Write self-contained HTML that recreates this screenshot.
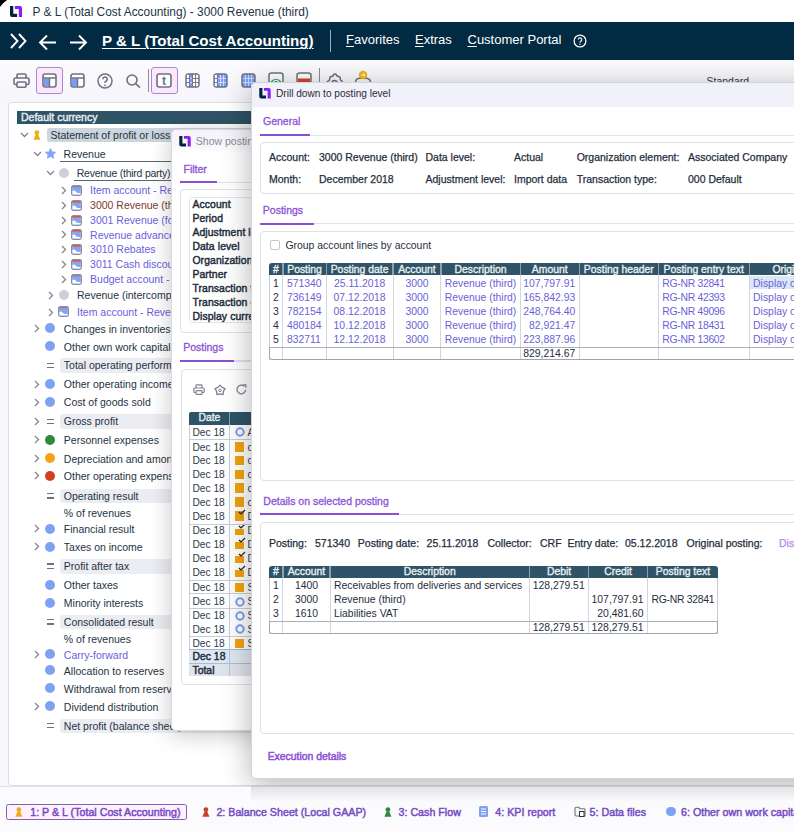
<!DOCTYPE html><html><head><meta charset="utf-8"><style>
html,body{margin:0;padding:0;width:794px;height:832px;overflow:hidden;background:#f8f7fc;font-family:"Liberation Sans", sans-serif;}
.t{position:absolute;white-space:nowrap;line-height:1;}
svg{display:block}
</style></head><body>
<div style="position:absolute;left:0px;top:0px;width:794px;height:22px;background:#ffffff"></div>
<svg style="position:absolute;left:0px;top:0px;" width="8" height="8" viewBox="0 0 8 8"><path d="M0 0H7.2Q3 2.6 0 7Z" fill="#000"/></svg>
<svg style="position:absolute;left:10px;top:6px;" width="12" height="11" viewBox="0 0 12 11"><path d="M0 0h3.3v7.8h3.8v3.1H2a2 2 0 0 1-2-2z" fill="#02233f"/><path d="M4.9 0h5.1a2 2 0 0 1 2 2v8.9H8.8V3H4.9z" fill="#8b1cf5"/></svg>
<div class="t" style="left:32.5px;top:6.93px;font-size:11.9px;color:#1d3347;font-weight:400;">P &amp; L (Total Cost Accounting) - 3000 Revenue (third)</div>
<div style="position:absolute;left:0px;top:22px;width:794px;height:38px;background:#022a42"></div>
<svg style="position:absolute;left:9px;top:32px;" width="20" height="18" viewBox="0 0 20 18"><path d="M2 2l6.5 7-6.5 7M10 2l6.5 7-6.5 7" stroke="#fff" stroke-width="1.9" fill="none"/></svg>
<svg style="position:absolute;left:38px;top:33.8px;" width="19" height="17" viewBox="0 0 19 17"><path d="M18 8.5H2M9 1.5L2 8.5l7 7" stroke="#fff" stroke-width="1.9" fill="none"/></svg>
<svg style="position:absolute;left:69px;top:33.8px;" width="19" height="17" viewBox="0 0 19 17"><path d="M1 8.5h16M10 1.5l7 7-7 7" stroke="#fff" stroke-width="1.9" fill="none"/></svg>
<div class="t" style="left:102.0px;top:33.22px;font-size:15.1px;color:#ffffff;font-weight:700;text-decoration:underline;text-underline-offset:2px;text-decoration-thickness:1px;">P &amp; L (Total Cost Accounting)</div>
<div style="position:absolute;left:330px;top:30px;width:1px;height:22px;background:#9fb0bf"></div>
<div class="t" style="left:346px;top:33.30px;font-size:13px;color:#fff;"><span style="text-decoration:underline;text-underline-offset:2px">F</span>avorites</div>
<div class="t" style="left:415px;top:33.30px;font-size:13px;color:#fff;"><span style="text-decoration:underline;text-underline-offset:2px">E</span>xtras</div>
<div class="t" style="left:467.5px;top:33.30px;font-size:13px;color:#fff;"><span style="text-decoration:underline;text-underline-offset:2px">C</span>ustomer Portal</div>
<svg style="position:absolute;left:573px;top:34px;" width="14" height="14" viewBox="0 0 14 14"><circle cx="7" cy="7" r="5.9" stroke="#fff" stroke-width="1.3" fill="none"/><path d="M5.3 5.6a1.75 1.75 0 1 1 2.5 1.6c-.5.25-.8.6-.8 1.2v.4" stroke="#fff" stroke-width="1.1" fill="none"/><circle cx="7" cy="10.2" r=".7" fill="#fff"/></svg>
<div style="position:absolute;left:0px;top:60px;width:794px;height:42px;background:linear-gradient(#fbfbfd,#f6f5fa)"></div>
<svg style="position:absolute;left:13px;top:73px;" width="17" height="15" viewBox="0 0 17 15"><path d="M4 5V2.2A1.2 1.2 0 0 1 5.2 1h6.6A1.2 1.2 0 0 1 13 2.2V5" stroke="#6e7080" stroke-width="1.6" fill="none"/><path d="M4 11.5H2.5A1.5 1.5 0 0 1 1 10V6.5A1.5 1.5 0 0 1 2.5 5h12A1.5 1.5 0 0 1 16 6.5V10a1.5 1.5 0 0 1-1.5 1.5H13" stroke="#6e7080" stroke-width="1.6" fill="none"/><rect x="4" y="9" width="9" height="5.2" rx="1" stroke="#6e7080" stroke-width="1.6" fill="none"/></svg>
<div style="position:absolute;left:36px;top:67px;width:25px;height:25px;background:#fce8fa;border:1px solid #a48ad6;border-radius:3px"></div>
<svg style="position:absolute;left:42px;top:73px;" width="15" height="15" viewBox="0 0 15 15"><rect x="1" y="1" width="13" height="13" rx="2.2" fill="#fff" stroke="#6e7080" stroke-width="1.6"/><rect x="1.8" y="5.6" width="5.2" height="7.6" fill="#7b9cf2"/><path d="M1 5h13M7.5 5v9" stroke="#6e7080" stroke-width="1.4"/></svg>
<svg style="position:absolute;left:70px;top:73px;" width="15" height="15" viewBox="0 0 15 15"><rect x="1" y="1" width="13" height="13" rx="2.2" fill="#fff" stroke="#6e7080" stroke-width="1.6"/><rect x="1.8" y="5.6" width="5.2" height="7.6" fill="#7b9cf2"/><path d="M1 5h13M7.5 5v9" stroke="#6e7080" stroke-width="1.4"/></svg>
<svg style="position:absolute;left:97px;top:73px;" width="16" height="16" viewBox="0 0 16 16"><circle cx="8" cy="8" r="7" stroke="#6e7080" stroke-width="1.5" fill="none"/><path d="M5.8 6.2a2.2 2.2 0 1 1 3.1 2c-.6.3-.9.7-.9 1.4v.5" stroke="#6e7080" stroke-width="1.5" fill="none"/><circle cx="8" cy="12.3" r=".9" fill="#6e7080"/></svg>
<svg style="position:absolute;left:126px;top:74px;" width="15" height="14" viewBox="0 0 15 14"><circle cx="6" cy="6" r="5" stroke="#6e7080" stroke-width="1.6" fill="none"/><path d="M9.6 9.6L14 13.6" stroke="#6e7080" stroke-width="1.6"/></svg>
<div style="position:absolute;left:148px;top:69px;width:1.3px;height:23px;background:#8a8c99"></div>
<div style="position:absolute;left:151px;top:67px;width:25px;height:25px;background:#fce8fa;border:1px solid #a48ad6;border-radius:3px"></div>
<svg style="position:absolute;left:156px;top:73px;" width="16" height="15" viewBox="0 0 16 15"><rect x="1" y="1" width="14" height="13" rx="2.2" fill="#fff" stroke="#6e7080" stroke-width="1.6"/><text x="8" y="12" font-size="12" font-family="Liberation Sans" font-weight="700" text-anchor="middle" fill="#6e7080">t</text></svg>
<svg style="position:absolute;left:184.5px;top:73px;" width="15" height="15" viewBox="0 0 15 15"><rect x="0.3" y="0.3" width="14.4" height="14.4" rx="3" fill="#6e7080"/><rect x="4.88" y="1.8" width="2.17" height="11.4" fill="#7b9cf2"/><rect x="1.80" y="1.80" width="2.17" height="3.20" fill="#fff"/><rect x="1.80" y="5.90" width="2.17" height="3.20" fill="#fff"/><rect x="1.80" y="10.00" width="2.17" height="3.20" fill="#fff"/><rect x="7.95" y="1.80" width="2.17" height="3.20" fill="#fff"/><rect x="7.95" y="5.90" width="2.17" height="3.20" fill="#fff"/><rect x="7.95" y="10.00" width="2.17" height="3.20" fill="#fff"/><rect x="11.03" y="1.80" width="2.17" height="3.20" fill="#fff"/><rect x="11.03" y="5.90" width="2.17" height="3.20" fill="#fff"/><rect x="11.03" y="10.00" width="2.17" height="3.20" fill="#fff"/><path d="M4.88 5.45H7.05" stroke="#dfe7ff" stroke-width=".8"/><path d="M4.88 9.55H7.05" stroke="#dfe7ff" stroke-width=".8"/></svg>
<svg style="position:absolute;left:212.5px;top:73px;" width="15" height="15" viewBox="0 0 15 15"><rect x="0.3" y="0.3" width="14.4" height="14.4" rx="3" fill="#6e7080"/><rect x="4.88" y="1.8" width="8.32" height="11.4" fill="#7b9cf2"/><rect x="1.80" y="1.80" width="2.17" height="3.20" fill="#fff"/><rect x="1.80" y="5.90" width="2.17" height="3.20" fill="#fff"/><rect x="1.80" y="10.00" width="2.17" height="3.20" fill="#fff"/><path d="M4.88 5.45H13.20" stroke="#dfe7ff" stroke-width=".8"/><path d="M4.88 9.55H13.20" stroke="#dfe7ff" stroke-width=".8"/><path d="M7.50 1.8v11.4" stroke="#dfe7ff" stroke-width=".8"/><path d="M10.57 1.8v11.4" stroke="#dfe7ff" stroke-width=".8"/></svg>
<svg style="position:absolute;left:240.5px;top:73px;" width="15" height="15" viewBox="0 0 15 15"><rect x="0.3" y="0.3" width="14.4" height="14.4" rx="3" fill="#6e7080"/><rect x="1.80" y="1.8" width="11.40" height="11.4" fill="#7b9cf2"/><path d="M1.80 5.45H13.20" stroke="#dfe7ff" stroke-width=".8"/><path d="M1.80 9.55H13.20" stroke="#dfe7ff" stroke-width=".8"/><path d="M4.42 1.8v11.4" stroke="#dfe7ff" stroke-width=".8"/><path d="M7.50 1.8v11.4" stroke="#dfe7ff" stroke-width=".8"/><path d="M10.57 1.8v11.4" stroke="#dfe7ff" stroke-width=".8"/></svg>
<svg style="position:absolute;left:268px;top:72px;" width="16" height="10" viewBox="0 0 16 10"><rect x="1" y="1" width="14" height="14" rx="2.5" fill="#fff" stroke="#6e7080" stroke-width="1.5"/><path d="M2.5 9.5Q8 4 13.5 9.5Q8 15 2.5 9.5z" fill="#3aa55a"/><path d="M5 9.8Q8 7 11 9.8" stroke="#fff" stroke-width="1.2" fill="none"/></svg>
<svg style="position:absolute;left:296px;top:72px;" width="16" height="10" viewBox="0 0 16 10"><rect x="1" y="1" width="14" height="14" rx="2.5" fill="#fff" stroke="#6e7080" stroke-width="1.5"/><rect x="2" y="6.5" width="12" height="5" fill="#d8412f"/></svg>
<div style="position:absolute;left:319px;top:68px;width:1.2px;height:14px;background:#8a8c99"></div>
<svg style="position:absolute;left:326px;top:72.5px;" width="17" height="10" viewBox="0 0 17 10"><path d="M3 11V8.5l2-1.5.5-3 2.8-1 1.5-2h1.4l1.5 2 2.8 1 .5 3 2 1.5V11" stroke="#6e7080" stroke-width="1.5" fill="none" transform="translate(-1.5,0)"/><circle cx="8.5" cy="10" r="2.5" stroke="#6e7080" stroke-width="1.5" fill="none"/></svg>
<svg style="position:absolute;left:354px;top:70px;" width="18" height="12" viewBox="0 0 18 12"><path d="M1.5 12a4 4 0 0 1 5.5-3.5M16.5 12a4 4 0 0 0-5.5-3.5" stroke="#6e7080" stroke-width="1.5" fill="none"/><circle cx="9" cy="5" r="4.2" fill="#f2b416"/><path d="M7 5h4M9.4 3.3L11 5 9.4 6.7" stroke="#fff" stroke-width="1" fill="none"/></svg>
<div class="t" style="left:706.5px;top:76.11px;font-size:10.5px;color:#2b3a48;font-weight:400;">Standard</div>
<div style="position:absolute;left:8px;top:102px;width:800px;height:684px;background:#ffffff;border:1px solid #dcdce3;border-radius:4px;box-sizing:border-box"></div>
<div style="position:absolute;left:17px;top:111px;width:300px;height:13px;background:#2f5467"></div>
<div class="t" style="left:21.0px;top:112.41px;font-size:10.5px;color:#e9eff3;font-weight:400;-webkit-text-stroke:0.4px #e9eff3;">Default currency</div>
<div style="position:absolute;left:47px;top:127.5px;width:213px;height:14.5px;background:#cdd5de;border-radius:3px"></div>
<svg style="position:absolute;left:19.5px;top:131.8px;" width="9" height="6" viewBox="0 0 9 6"><path d="M1 1l3.5 3.5L8 1" stroke="#84848f" stroke-width="1.3" fill="none"/></svg>
<svg style="position:absolute;left:33.2px;top:129.8px;" width="8" height="10" viewBox="0 0 8 10"><circle cx="3.9" cy="2.6" r="2.4" fill="#f0ac12"/><path d="M2.7 4.2h2.4l2.3 5.6H.4z" fill="#f0ac12"/></svg>
<div class="t" style="left:50.6px;top:129.91px;font-size:10.5px;color:#24333f;font-weight:400;">Statement of profit or loss</div>
<svg style="position:absolute;left:33px;top:150.7px;" width="9" height="6" viewBox="0 0 9 6"><path d="M1 1l3.5 3.5L8 1" stroke="#84848f" stroke-width="1.3" fill="none"/></svg>
<svg style="position:absolute;left:44.8px;top:148px;" width="11" height="11" viewBox="0 0 11 11"><path d="M5.50 0.60 L6.97 3.88 L10.54 4.26 L7.88 6.67 L8.62 10.19 L5.50 8.40 L2.38 10.19 L3.12 6.67 L0.46 4.26 L4.03 3.88Z" fill="#82a6f5" stroke="#82a6f5" stroke-width="0.9" stroke-linejoin="round"/></svg>
<div class="t" style="left:63.6px;top:149.01px;font-size:10.5px;color:#24333f;font-weight:400;">Revenue</div>
<div style="position:absolute;left:60px;top:161.2px;width:200px;height:1.2px;background:#5c6470"></div>
<svg style="position:absolute;left:46px;top:170px;" width="9" height="6" viewBox="0 0 9 6"><path d="M1 1l3.5 3.5L8 1" stroke="#84848f" stroke-width="1.3" fill="none"/></svg>
<div style="position:absolute;left:58.5px;top:167.8px;width:10px;height:10px;background:#cfcfdc;border-radius:50%"></div>
<div class="t" style="left:76.7px;top:167.81px;font-size:10.5px;color:#24333f;font-weight:400;letter-spacing:-0.24px;">Revenue (third party)</div>
<div style="position:absolute;left:73.8px;top:179.8px;width:200px;height:1.2px;background:#5c6470"></div>
<svg style="position:absolute;left:61px;top:185.8px;" width="6" height="9" viewBox="0 0 6 9"><path d="M1 1l3.5 3.5L1 8" stroke="#84848f" stroke-width="1.3" fill="none"/></svg>
<svg style="position:absolute;left:71px;top:184.8px;" width="11" height="11" viewBox="0 0 11 11"><rect x=".6" y=".6" width="9.8" height="9.8" rx="1.8" fill="#fff"/><rect x="1.2" y="2.6" width="8.6" height="7.2" fill="#82a6f5"/><path d="M1.2 9.8V6.2c1.3-1 2.4-.8 3.4.4 1 1.1 2.2 1.6 3.8 1.5h1.4v1.7z" fill="#fff"/><path d="M.6 2.4A1.8 1.8 0 0 1 2.4.6h6.2a1.8 1.8 0 0 1 1.8 1.8v.4H.6z" fill="#8586a0"/><rect x=".6" y=".6" width="9.8" height="9.8" rx="1.8" fill="none" stroke="#8d8ea5" stroke-width="1.2"/></svg>
<div class="t" style="left:90.1px;top:185.01px;font-size:10.5px;color:#6a5ee0;font-weight:400;">Item account - Revenue</div>
<svg style="position:absolute;left:61px;top:200.6px;" width="6" height="9" viewBox="0 0 6 9"><path d="M1 1l3.5 3.5L1 8" stroke="#84848f" stroke-width="1.3" fill="none"/></svg>
<svg style="position:absolute;left:71px;top:199.6px;" width="11" height="11" viewBox="0 0 11 11"><rect x=".6" y=".6" width="9.8" height="9.8" rx="1.8" fill="#fff"/><rect x="1.2" y="2.6" width="8.6" height="7.2" fill="#82a6f5"/><path d="M1.2 9.8V6.2c1.3-1 2.4-.8 3.4.4 1 1.1 2.2 1.6 3.8 1.5h1.4v1.7z" fill="#fff"/><path d="M.6 2.4A1.8 1.8 0 0 1 2.4.6h6.2a1.8 1.8 0 0 1 1.8 1.8v.4H.6z" fill="#d2523a"/><rect x=".6" y=".6" width="9.8" height="9.8" rx="1.8" fill="none" stroke="#8d8ea5" stroke-width="1.2"/></svg>
<div class="t" style="left:90.1px;top:199.81px;font-size:10.5px;color:#7b3a2e;font-weight:400;">3000 Revenue (third)</div>
<svg style="position:absolute;left:61px;top:215.5px;" width="6" height="9" viewBox="0 0 6 9"><path d="M1 1l3.5 3.5L1 8" stroke="#84848f" stroke-width="1.3" fill="none"/></svg>
<svg style="position:absolute;left:71px;top:214.5px;" width="11" height="11" viewBox="0 0 11 11"><rect x=".6" y=".6" width="9.8" height="9.8" rx="1.8" fill="#fff"/><rect x="1.2" y="2.6" width="8.6" height="7.2" fill="#82a6f5"/><path d="M1.2 9.8V6.2c1.3-1 2.4-.8 3.4.4 1 1.1 2.2 1.6 3.8 1.5h1.4v1.7z" fill="#fff"/><path d="M.6 2.4A1.8 1.8 0 0 1 2.4.6h6.2a1.8 1.8 0 0 1 1.8 1.8v.4H.6z" fill="#d2523a"/><rect x=".6" y=".6" width="9.8" height="9.8" rx="1.8" fill="none" stroke="#8d8ea5" stroke-width="1.2"/></svg>
<div class="t" style="left:90.1px;top:214.71px;font-size:10.5px;color:#6a5ee0;font-weight:400;">3001 Revenue (foreign)</div>
<svg style="position:absolute;left:61px;top:230.3px;" width="6" height="9" viewBox="0 0 6 9"><path d="M1 1l3.5 3.5L1 8" stroke="#84848f" stroke-width="1.3" fill="none"/></svg>
<svg style="position:absolute;left:71px;top:229.3px;" width="11" height="11" viewBox="0 0 11 11"><rect x=".6" y=".6" width="9.8" height="9.8" rx="1.8" fill="#fff"/><rect x="1.2" y="2.6" width="8.6" height="7.2" fill="#82a6f5"/><path d="M1.2 9.8V6.2c1.3-1 2.4-.8 3.4.4 1 1.1 2.2 1.6 3.8 1.5h1.4v1.7z" fill="#fff"/><path d="M.6 2.4A1.8 1.8 0 0 1 2.4.6h6.2a1.8 1.8 0 0 1 1.8 1.8v.4H.6z" fill="#d2523a"/><rect x=".6" y=".6" width="9.8" height="9.8" rx="1.8" fill="none" stroke="#8d8ea5" stroke-width="1.2"/></svg>
<div class="t" style="left:90.1px;top:229.51px;font-size:10.5px;color:#6a5ee0;font-weight:400;">Revenue advances</div>
<svg style="position:absolute;left:61px;top:244.9px;" width="6" height="9" viewBox="0 0 6 9"><path d="M1 1l3.5 3.5L1 8" stroke="#84848f" stroke-width="1.3" fill="none"/></svg>
<svg style="position:absolute;left:71px;top:243.9px;" width="11" height="11" viewBox="0 0 11 11"><rect x=".6" y=".6" width="9.8" height="9.8" rx="1.8" fill="#fff"/><rect x="1.2" y="2.6" width="8.6" height="7.2" fill="#82a6f5"/><path d="M1.2 9.8V6.2c1.3-1 2.4-.8 3.4.4 1 1.1 2.2 1.6 3.8 1.5h1.4v1.7z" fill="#fff"/><path d="M.6 2.4A1.8 1.8 0 0 1 2.4.6h6.2a1.8 1.8 0 0 1 1.8 1.8v.4H.6z" fill="#d2523a"/><rect x=".6" y=".6" width="9.8" height="9.8" rx="1.8" fill="none" stroke="#8d8ea5" stroke-width="1.2"/></svg>
<div class="t" style="left:90.1px;top:244.11px;font-size:10.5px;color:#6a5ee0;font-weight:400;">3010 Rebates</div>
<svg style="position:absolute;left:61px;top:260.0px;" width="6" height="9" viewBox="0 0 6 9"><path d="M1 1l3.5 3.5L1 8" stroke="#84848f" stroke-width="1.3" fill="none"/></svg>
<svg style="position:absolute;left:71px;top:259.0px;" width="11" height="11" viewBox="0 0 11 11"><rect x=".6" y=".6" width="9.8" height="9.8" rx="1.8" fill="#fff"/><rect x="1.2" y="2.6" width="8.6" height="7.2" fill="#82a6f5"/><path d="M1.2 9.8V6.2c1.3-1 2.4-.8 3.4.4 1 1.1 2.2 1.6 3.8 1.5h1.4v1.7z" fill="#fff"/><path d="M.6 2.4A1.8 1.8 0 0 1 2.4.6h6.2a1.8 1.8 0 0 1 1.8 1.8v.4H.6z" fill="#d2523a"/><rect x=".6" y=".6" width="9.8" height="9.8" rx="1.8" fill="none" stroke="#8d8ea5" stroke-width="1.2"/></svg>
<div class="t" style="left:90.1px;top:259.21px;font-size:10.5px;color:#6a5ee0;font-weight:400;">3011 Cash discounts</div>
<svg style="position:absolute;left:61px;top:274.6px;" width="6" height="9" viewBox="0 0 6 9"><path d="M1 1l3.5 3.5L1 8" stroke="#84848f" stroke-width="1.3" fill="none"/></svg>
<svg style="position:absolute;left:71px;top:273.6px;" width="11" height="11" viewBox="0 0 11 11"><rect x=".6" y=".6" width="9.8" height="9.8" rx="1.8" fill="#fff"/><rect x="1.2" y="2.6" width="8.6" height="7.2" fill="#82a6f5"/><path d="M1.2 9.8V6.2c1.3-1 2.4-.8 3.4.4 1 1.1 2.2 1.6 3.8 1.5h1.4v1.7z" fill="#fff"/><path d="M.6 2.4A1.8 1.8 0 0 1 2.4.6h6.2a1.8 1.8 0 0 1 1.8 1.8v.4H.6z" fill="#8586a0"/><rect x=".6" y=".6" width="9.8" height="9.8" rx="1.8" fill="none" stroke="#8d8ea5" stroke-width="1.2"/></svg>
<div class="t" style="left:90.1px;top:273.81px;font-size:10.5px;color:#6a5ee0;font-weight:400;">Budget account - Revenue</div>
<svg style="position:absolute;left:47.5px;top:290.9px;" width="6" height="9" viewBox="0 0 6 9"><path d="M1 1l3.5 3.5L1 8" stroke="#84848f" stroke-width="1.3" fill="none"/></svg>
<div style="position:absolute;left:58.6px;top:290.0px;width:10px;height:10px;background:#cfcfdc;border-radius:50%"></div>
<div class="t" style="left:77.0px;top:290.11px;font-size:10.5px;color:#24333f;font-weight:400;">Revenue (intercompany)</div>
<svg style="position:absolute;left:47.5px;top:307.5px;" width="6" height="9" viewBox="0 0 6 9"><path d="M1 1l3.5 3.5L1 8" stroke="#84848f" stroke-width="1.3" fill="none"/></svg>
<svg style="position:absolute;left:58px;top:306.3px;" width="11" height="11" viewBox="0 0 11 11"><rect x=".6" y=".6" width="9.8" height="9.8" rx="1.8" fill="#fff"/><rect x="1.2" y="2.6" width="8.6" height="7.2" fill="#82a6f5"/><path d="M1.2 9.8V6.2c1.3-1 2.4-.8 3.4.4 1 1.1 2.2 1.6 3.8 1.5h1.4v1.7z" fill="#fff"/><path d="M.6 2.4A1.8 1.8 0 0 1 2.4.6h6.2a1.8 1.8 0 0 1 1.8 1.8v.4H.6z" fill="#8586a0"/><rect x=".6" y=".6" width="9.8" height="9.8" rx="1.8" fill="none" stroke="#8d8ea5" stroke-width="1.2"/></svg>
<div class="t" style="left:77.0px;top:306.71px;font-size:10.5px;color:#6a5ee0;font-weight:400;">Item account - Revenue</div>
<svg style="position:absolute;left:34px;top:323.8px;" width="6" height="9" viewBox="0 0 6 9"><path d="M1 1l3.5 3.5L1 8" stroke="#84848f" stroke-width="1.3" fill="none"/></svg>
<div style="position:absolute;left:45.1px;top:323.3px;width:10px;height:10px;background:#7ea2f3;border-radius:50%"></div>
<div class="t" style="left:63.8px;top:323.71px;font-size:10.5px;color:#24333f;font-weight:400;">Changes in inventories</div>
<div style="position:absolute;left:45.1px;top:341.3px;width:10px;height:10px;background:#7ea2f3;border-radius:50%"></div>
<div class="t" style="left:63.8px;top:341.71px;font-size:10.5px;color:#24333f;font-weight:400;">Other own work capitalised</div>
<div style="position:absolute;left:60.4px;top:358.40000000000003px;width:199.6px;height:14.599999999999966px;background:#ececf3;border-radius:3px"></div>
<div style="position:absolute;left:46.7px;top:362.5px;width:7.5px;height:1.4px;background:#6f6f7d"></div>
<div style="position:absolute;left:46.7px;top:366.8px;width:7.5px;height:1.4px;background:#6f6f7d"></div>
<div class="t" style="left:63.8px;top:360.41px;font-size:10.5px;color:#24333f;font-weight:400;">Total operating performance</div>
<svg style="position:absolute;left:34px;top:379.5px;" width="6" height="9" viewBox="0 0 6 9"><path d="M1 1l3.5 3.5L1 8" stroke="#84848f" stroke-width="1.3" fill="none"/></svg>
<div style="position:absolute;left:45.1px;top:379.0px;width:10px;height:10px;background:#7ea2f3;border-radius:50%"></div>
<div class="t" style="left:63.8px;top:379.41px;font-size:10.5px;color:#24333f;font-weight:400;">Other operating income</div>
<svg style="position:absolute;left:34px;top:397.5px;" width="6" height="9" viewBox="0 0 6 9"><path d="M1 1l3.5 3.5L1 8" stroke="#84848f" stroke-width="1.3" fill="none"/></svg>
<div style="position:absolute;left:45.1px;top:397.0px;width:10px;height:10px;background:#7ea2f3;border-radius:50%"></div>
<div class="t" style="left:63.8px;top:397.41px;font-size:10.5px;color:#24333f;font-weight:400;">Cost of goods sold</div>
<div style="position:absolute;left:60.4px;top:414.40000000000003px;width:199.6px;height:14.599999999999966px;background:#ececf3;border-radius:3px"></div>
<svg style="position:absolute;left:34px;top:416.5px;" width="6" height="9" viewBox="0 0 6 9"><path d="M1 1l3.5 3.5L1 8" stroke="#84848f" stroke-width="1.3" fill="none"/></svg>
<div style="position:absolute;left:46.7px;top:418.5px;width:7.5px;height:1.4px;background:#6f6f7d"></div>
<div style="position:absolute;left:46.7px;top:422.8px;width:7.5px;height:1.4px;background:#6f6f7d"></div>
<div class="t" style="left:63.8px;top:416.41px;font-size:10.5px;color:#24333f;font-weight:400;">Gross profit</div>
<svg style="position:absolute;left:34px;top:435.09999999999997px;" width="6" height="9" viewBox="0 0 6 9"><path d="M1 1l3.5 3.5L1 8" stroke="#84848f" stroke-width="1.3" fill="none"/></svg>
<div style="position:absolute;left:45.1px;top:434.59999999999997px;width:10px;height:10px;background:#2d8a3a;border-radius:50%"></div>
<div class="t" style="left:63.8px;top:435.01px;font-size:10.5px;color:#24333f;font-weight:400;">Personnel expenses</div>
<svg style="position:absolute;left:34px;top:453.8px;" width="6" height="9" viewBox="0 0 6 9"><path d="M1 1l3.5 3.5L1 8" stroke="#84848f" stroke-width="1.3" fill="none"/></svg>
<div style="position:absolute;left:45.1px;top:453.3px;width:10px;height:10px;background:#f5a31a;border-radius:50%"></div>
<div class="t" style="left:63.8px;top:453.71px;font-size:10.5px;color:#24333f;font-weight:400;">Depreciation and amortisation</div>
<svg style="position:absolute;left:34px;top:471.2px;" width="6" height="9" viewBox="0 0 6 9"><path d="M1 1l3.5 3.5L1 8" stroke="#84848f" stroke-width="1.3" fill="none"/></svg>
<div style="position:absolute;left:45.1px;top:470.7px;width:10px;height:10px;background:#d4401f;border-radius:50%"></div>
<div class="t" style="left:63.8px;top:471.11px;font-size:10.5px;color:#24333f;font-weight:400;">Other operating expenses</div>
<div style="position:absolute;left:60.4px;top:488.8px;width:199.6px;height:14.599999999999966px;background:#ececf3;border-radius:3px"></div>
<div style="position:absolute;left:46.7px;top:492.9px;width:7.5px;height:1.4px;background:#6f6f7d"></div>
<div style="position:absolute;left:46.7px;top:497.2px;width:7.5px;height:1.4px;background:#6f6f7d"></div>
<div class="t" style="left:63.8px;top:490.81px;font-size:10.5px;color:#24333f;font-weight:400;">Operating result</div>
<div class="t" style="left:63.8px;top:507.81px;font-size:10.5px;color:#24333f;font-weight:400;">% of revenues</div>
<svg style="position:absolute;left:34px;top:524.3000000000001px;" width="6" height="9" viewBox="0 0 6 9"><path d="M1 1l3.5 3.5L1 8" stroke="#84848f" stroke-width="1.3" fill="none"/></svg>
<div style="position:absolute;left:45.1px;top:523.8000000000001px;width:10px;height:10px;background:#7ea2f3;border-radius:50%"></div>
<div class="t" style="left:63.8px;top:524.21px;font-size:10.5px;color:#24333f;font-weight:400;">Financial result</div>
<svg style="position:absolute;left:34px;top:542.3000000000001px;" width="6" height="9" viewBox="0 0 6 9"><path d="M1 1l3.5 3.5L1 8" stroke="#84848f" stroke-width="1.3" fill="none"/></svg>
<div style="position:absolute;left:45.1px;top:541.8000000000001px;width:10px;height:10px;background:#7ea2f3;border-radius:50%"></div>
<div class="t" style="left:63.8px;top:542.21px;font-size:10.5px;color:#24333f;font-weight:400;">Taxes on income</div>
<div style="position:absolute;left:60.4px;top:559.2px;width:199.6px;height:14.600000000000023px;background:#ececf3;border-radius:3px"></div>
<div style="position:absolute;left:46.7px;top:563.3000000000001px;width:7.5px;height:1.4px;background:#6f6f7d"></div>
<div style="position:absolute;left:46.7px;top:567.6px;width:7.5px;height:1.4px;background:#6f6f7d"></div>
<div class="t" style="left:63.8px;top:561.21px;font-size:10.5px;color:#24333f;font-weight:400;">Profit after tax</div>
<div style="position:absolute;left:45.1px;top:579.8000000000001px;width:10px;height:10px;background:#7ea2f3;border-radius:50%"></div>
<div class="t" style="left:63.8px;top:580.21px;font-size:10.5px;color:#24333f;font-weight:400;">Other taxes</div>
<div style="position:absolute;left:45.1px;top:597.8000000000001px;width:10px;height:10px;background:#7ea2f3;border-radius:50%"></div>
<div class="t" style="left:63.8px;top:598.21px;font-size:10.5px;color:#24333f;font-weight:400;">Minority interests</div>
<div style="position:absolute;left:60.4px;top:614.9px;width:199.6px;height:14.600000000000023px;background:#ececf3;border-radius:3px"></div>
<div style="position:absolute;left:46.7px;top:619.0px;width:7.5px;height:1.4px;background:#6f6f7d"></div>
<div style="position:absolute;left:46.7px;top:623.3px;width:7.5px;height:1.4px;background:#6f6f7d"></div>
<div class="t" style="left:63.8px;top:616.91px;font-size:10.5px;color:#24333f;font-weight:400;">Consolidated result</div>
<div class="t" style="left:63.8px;top:634.21px;font-size:10.5px;color:#24333f;font-weight:400;">% of revenues</div>
<svg style="position:absolute;left:34px;top:649.7px;" width="6" height="9" viewBox="0 0 6 9"><path d="M1 1l3.5 3.5L1 8" stroke="#84848f" stroke-width="1.3" fill="none"/></svg>
<div style="position:absolute;left:45.1px;top:649.2px;width:10px;height:10px;background:#7ea2f3;border-radius:50%"></div>
<div class="t" style="left:63.8px;top:649.61px;font-size:10.5px;color:#6a5ee0;font-weight:400;">Carry-forward</div>
<div style="position:absolute;left:45.1px;top:665.3000000000001px;width:10px;height:10px;background:#7ea2f3;border-radius:50%"></div>
<div class="t" style="left:63.8px;top:665.71px;font-size:10.5px;color:#24333f;font-weight:400;">Allocation to reserves</div>
<div style="position:absolute;left:45.1px;top:683.3000000000001px;width:10px;height:10px;background:#7ea2f3;border-radius:50%"></div>
<div class="t" style="left:63.8px;top:683.71px;font-size:10.5px;color:#24333f;font-weight:400;">Withdrawal from reserves</div>
<svg style="position:absolute;left:34px;top:701.8000000000001px;" width="6" height="9" viewBox="0 0 6 9"><path d="M1 1l3.5 3.5L1 8" stroke="#84848f" stroke-width="1.3" fill="none"/></svg>
<div style="position:absolute;left:45.1px;top:701.3000000000001px;width:10px;height:10px;background:#7ea2f3;border-radius:50%"></div>
<div class="t" style="left:63.8px;top:701.71px;font-size:10.5px;color:#24333f;font-weight:400;">Dividend distribution</div>
<div style="position:absolute;left:60.4px;top:718.7px;width:199.6px;height:14.600000000000023px;background:#ececf3;border-radius:3px"></div>
<div style="position:absolute;left:46.7px;top:722.8000000000001px;width:7.5px;height:1.4px;background:#6f6f7d"></div>
<div style="position:absolute;left:46.7px;top:727.1px;width:7.5px;height:1.4px;background:#6f6f7d"></div>
<div class="t" style="left:63.8px;top:720.71px;font-size:10.5px;color:#24333f;font-weight:400;">Net profit (balance sheet)</div>
<div style="position:absolute;left:170.6px;top:128.5px;width:300px;height:602px;background:#fff;border:1px solid #d9d9e0;border-radius:5px;box-sizing:border-box;box-shadow:0 4px 22px rgba(0,0,0,0.22)"></div>
<div style="position:absolute;left:172px;top:129.5px;width:280px;height:24px;background:linear-gradient(#f4f3f9,#f8f7fc 70%,#fff);border-radius:5px 0 0 0"></div>
<svg style="position:absolute;left:179px;top:136px;" width="12" height="10.5" viewBox="0 0 12 11"><path d="M0 0h3.3v7.8h3.8v3.1H2a2 2 0 0 1-2-2z" fill="#02233f"/><path d="M4.9 0h5.1a2 2 0 0 1 2 2v8.9H8.8V3H4.9z" fill="#8b1cf5"/></svg>
<div class="t" style="left:195.8px;top:135.91px;font-size:10.5px;color:#8b8b96;font-weight:400;">Show postings</div>
<div class="t" style="left:183.5px;top:163.71px;font-size:10.5px;color:#8e52d6;font-weight:400;-webkit-text-stroke:0.35px #8e52d6;">Filter</div>
<div style="position:absolute;left:179.5px;top:181.5px;width:80px;height:1.2px;background:#e2e2ea"></div>
<div style="position:absolute;left:179.5px;top:181px;width:37.5px;height:2.2px;background:#8a4fd6"></div>
<div style="position:absolute;left:179.6px;top:189.3px;width:120px;height:143.5px;border:1px solid #e0e0e7;border-radius:4px;box-sizing:border-box;background:#fff"></div>
<div style="position:absolute;left:189.1px;top:197.2px;width:120px;height:125.4px;border:1px solid #e3e3ea;border-radius:3px;box-sizing:border-box;background:#fff"></div>
<div class="t" style="left:192.4px;top:200.40px;font-size:10.4px;color:#1f2e3d;font-weight:400;-webkit-text-stroke:0.45px #1f2e3d;letter-spacing:0.1px;">Account</div>
<div class="t" style="left:192.4px;top:214.38px;font-size:10.4px;color:#1f2e3d;font-weight:400;-webkit-text-stroke:0.45px #1f2e3d;letter-spacing:0.1px;">Period</div>
<div class="t" style="left:192.4px;top:228.36px;font-size:10.4px;color:#1f2e3d;font-weight:400;-webkit-text-stroke:0.45px #1f2e3d;letter-spacing:0.1px;">Adjustment level</div>
<div class="t" style="left:192.4px;top:242.34px;font-size:10.4px;color:#1f2e3d;font-weight:400;-webkit-text-stroke:0.45px #1f2e3d;letter-spacing:0.1px;">Data level</div>
<div class="t" style="left:192.4px;top:256.32px;font-size:10.4px;color:#1f2e3d;font-weight:400;-webkit-text-stroke:0.45px #1f2e3d;letter-spacing:0.1px;">Organization element</div>
<div class="t" style="left:192.4px;top:270.30px;font-size:10.4px;color:#1f2e3d;font-weight:400;-webkit-text-stroke:0.45px #1f2e3d;letter-spacing:0.1px;">Partner</div>
<div class="t" style="left:192.4px;top:284.28px;font-size:10.4px;color:#1f2e3d;font-weight:400;-webkit-text-stroke:0.45px #1f2e3d;letter-spacing:0.1px;">Transaction type</div>
<div class="t" style="left:192.4px;top:298.26px;font-size:10.4px;color:#1f2e3d;font-weight:400;-webkit-text-stroke:0.45px #1f2e3d;letter-spacing:0.1px;">Transaction currency</div>
<div class="t" style="left:192.4px;top:312.24px;font-size:10.4px;color:#1f2e3d;font-weight:400;-webkit-text-stroke:0.45px #1f2e3d;letter-spacing:0.1px;">Display currency</div>
<div class="t" style="left:183.2px;top:342.21px;font-size:10.5px;color:#8e52d6;font-weight:400;-webkit-text-stroke:0.3px #8e52d6;">Postings</div>
<div style="position:absolute;left:179.5px;top:360.4px;width:80px;height:1.2px;background:#e2e2ea"></div>
<div style="position:absolute;left:179.7px;top:360px;width:54.4px;height:2.2px;background:#8a4fd6"></div>
<div style="position:absolute;left:180.6px;top:369px;width:120px;height:316px;border:1px solid #e0e0e7;border-radius:4px;box-sizing:border-box;background:#fff"></div>
<svg style="position:absolute;left:192.5px;top:384px;" width="12" height="11" viewBox="0 0 12 11"><path d="M3 4V1.6A.8.8 0 0 1 3.8.8h4.4a.8.8 0 0 1 .8.8V4" stroke="#857f96" stroke-width="1.2" fill="none"/><path d="M3 8.5H1.8A1 1 0 0 1 .8 7.5V5A1 1 0 0 1 1.8 4h8.4a1 1 0 0 1 1 1v2.5a1 1 0 0 1-1 1H9" stroke="#857f96" stroke-width="1.2" fill="none"/><rect x="3" y="6.6" width="6" height="3.8" rx=".6" stroke="#857f96" stroke-width="1.2" fill="none"/></svg>
<svg style="position:absolute;left:214px;top:383.5px;" width="12" height="12" viewBox="0 0 12 12"><path d="M6.00 1.10 L8.12 3.39 L10.95 4.69 L9.42 7.41 L9.06 10.51 L6.00 9.90 L2.94 10.51 L2.58 7.41 L1.05 4.69 L3.88 3.39Z" stroke="#857f96" stroke-width="1.3" stroke-linejoin="round" fill="none"/><circle cx="6" cy="6.5" r="1.2" stroke="#857f96" stroke-width="1" fill="none"/></svg>
<svg style="position:absolute;left:236px;top:384px;" width="11" height="11" viewBox="0 0 11 11"><path d="M9.6 5.8A4.3 4.3 0 1 1 8.3 2.4" stroke="#857f96" stroke-width="1.3" fill="none"/><path d="M6.8 .8h3v3" stroke="#857f96" stroke-width="1.3" fill="none"/></svg>
<div style="position:absolute;left:189.2px;top:412px;width:90px;height:12.5px;background:#2f5467;border-radius:2px 0 0 0"></div>
<div style="position:absolute;left:229.2px;top:412px;width:1.2px;height:12.5px;background:#8ea0ae"></div>
<div class="t" style="left:198.4px;top:413.30px;font-size:10.4px;color:#e9eff3;font-weight:400;-webkit-text-stroke:0.35px #e9eff3;">Date</div>
<div style="position:absolute;left:189.2px;top:424.5px;width:1px;height:251px;background:#c9ccd6"></div>
<div style="position:absolute;left:229.2px;top:424.5px;width:1px;height:225px;background:#c9ccd6"></div>
<div class="t" style="left:247.5px;top:427.67px;font-size:10.2px;color:#2b3a48;font-weight:400;">A</div>
<div class="t" style="left:192.5px;top:427.67px;font-size:10.2px;color:#2b3a48;font-weight:400;">Dec 18</div>
<svg style="position:absolute;left:234.6px;top:427.29999999999995px;" width="10" height="10" viewBox="0 0 10 10"><circle cx="5" cy="5" r="3.7" stroke="#7a9df0" stroke-width="2" fill="none"/></svg>
<div class="t" style="left:247.5px;top:442.77px;font-size:10.2px;color:#2b3a48;font-weight:400;">c</div>
<div class="t" style="left:192.5px;top:442.77px;font-size:10.2px;color:#2b3a48;font-weight:400;">Dec 18</div>
<div style="position:absolute;left:234.6px;top:442.2px;width:9.6px;height:9.6px;background:#f2a30f"></div>
<div class="t" style="left:247.5px;top:456.27px;font-size:10.2px;color:#2b3a48;font-weight:400;">c</div>
<div class="t" style="left:192.5px;top:456.27px;font-size:10.2px;color:#2b3a48;font-weight:400;">Dec 18</div>
<div style="position:absolute;left:234.6px;top:455.7px;width:9.6px;height:9.6px;background:#f2a30f"></div>
<div class="t" style="left:247.5px;top:470.07px;font-size:10.2px;color:#2b3a48;font-weight:400;">c</div>
<div class="t" style="left:192.5px;top:470.07px;font-size:10.2px;color:#2b3a48;font-weight:400;">Dec 18</div>
<div style="position:absolute;left:234.6px;top:469.5px;width:9.6px;height:9.6px;background:#f2a30f"></div>
<div class="t" style="left:247.5px;top:483.97px;font-size:10.2px;color:#2b3a48;font-weight:400;">c</div>
<div class="t" style="left:192.5px;top:483.97px;font-size:10.2px;color:#2b3a48;font-weight:400;">Dec 18</div>
<div style="position:absolute;left:234.6px;top:483.4px;width:9.6px;height:9.6px;background:#f2a30f"></div>
<div class="t" style="left:247.5px;top:497.87px;font-size:10.2px;color:#2b3a48;font-weight:400;">c</div>
<div class="t" style="left:192.5px;top:497.87px;font-size:10.2px;color:#2b3a48;font-weight:400;">Dec 18</div>
<div style="position:absolute;left:234.6px;top:497.3px;width:9.6px;height:9.6px;background:#f2a30f"></div>
<div class="t" style="left:247.5px;top:511.77px;font-size:10.2px;color:#2b3a48;font-weight:400;">D</div>
<div class="t" style="left:192.5px;top:511.77px;font-size:10.2px;color:#2b3a48;font-weight:400;">Dec 18</div>
<div style="position:absolute;left:234.6px;top:511.2px;width:9.6px;height:9.6px;background:#f2a30f"></div>
<svg style="position:absolute;left:238px;top:508.5px;" width="8" height="6" viewBox="0 0 8 6"><path d="M1 3l2 2 4-4" stroke="#222" stroke-width="1.2" fill="none"/></svg>
<div class="t" style="left:247.5px;top:526.47px;font-size:10.2px;color:#2b3a48;font-weight:400;">D</div>
<div class="t" style="left:192.5px;top:526.47px;font-size:10.2px;color:#2b3a48;font-weight:400;">Dec 18</div>
<div style="position:absolute;left:234.6px;top:528.5px;width:9.6px;height:6.5px;background:#f2a30f"></div>
<svg style="position:absolute;left:238px;top:523.2px;" width="8" height="6" viewBox="0 0 8 6"><path d="M1 3l2 2 4-4" stroke="#222" stroke-width="1.2" fill="none"/></svg>
<div class="t" style="left:247.5px;top:540.07px;font-size:10.2px;color:#2b3a48;font-weight:400;">D</div>
<div class="t" style="left:192.5px;top:540.07px;font-size:10.2px;color:#2b3a48;font-weight:400;">Dec 18</div>
<div style="position:absolute;left:234.6px;top:542.0999999999999px;width:9.6px;height:6.5px;background:#f2a30f"></div>
<svg style="position:absolute;left:238px;top:536.8px;" width="8" height="6" viewBox="0 0 8 6"><path d="M1 3l2 2 4-4" stroke="#222" stroke-width="1.2" fill="none"/></svg>
<div class="t" style="left:247.5px;top:554.37px;font-size:10.2px;color:#2b3a48;font-weight:400;">D</div>
<div class="t" style="left:192.5px;top:554.37px;font-size:10.2px;color:#2b3a48;font-weight:400;">Dec 18</div>
<div style="position:absolute;left:234.6px;top:556.4px;width:9.6px;height:6.5px;background:#f2a30f"></div>
<svg style="position:absolute;left:238px;top:551.1px;" width="8" height="6" viewBox="0 0 8 6"><path d="M1 3l2 2 4-4" stroke="#222" stroke-width="1.2" fill="none"/></svg>
<div class="t" style="left:247.5px;top:568.17px;font-size:10.2px;color:#2b3a48;font-weight:400;">D</div>
<div class="t" style="left:192.5px;top:568.17px;font-size:10.2px;color:#2b3a48;font-weight:400;">Dec 18</div>
<div style="position:absolute;left:234.6px;top:570.1999999999999px;width:9.6px;height:6.5px;background:#f2a30f"></div>
<svg style="position:absolute;left:238px;top:564.9px;" width="8" height="6" viewBox="0 0 8 6"><path d="M1 3l2 2 4-4" stroke="#222" stroke-width="1.2" fill="none"/></svg>
<div class="t" style="left:247.5px;top:583.27px;font-size:10.2px;color:#2b3a48;font-weight:400;">S</div>
<div class="t" style="left:192.5px;top:583.27px;font-size:10.2px;color:#2b3a48;font-weight:400;">Dec 18</div>
<div style="position:absolute;left:234.6px;top:582.7px;width:9.6px;height:9.6px;background:#f2a30f"></div>
<div class="t" style="left:247.5px;top:597.17px;font-size:10.2px;color:#2b3a48;font-weight:400;">S</div>
<div class="t" style="left:192.5px;top:597.17px;font-size:10.2px;color:#2b3a48;font-weight:400;">Dec 18</div>
<svg style="position:absolute;left:234.6px;top:596.8px;" width="10" height="10" viewBox="0 0 10 10"><circle cx="5" cy="5" r="3.7" stroke="#7a9df0" stroke-width="2" fill="none"/></svg>
<div class="t" style="left:247.5px;top:611.07px;font-size:10.2px;color:#2b3a48;font-weight:400;">S</div>
<div class="t" style="left:192.5px;top:611.07px;font-size:10.2px;color:#2b3a48;font-weight:400;">Dec 18</div>
<svg style="position:absolute;left:234.6px;top:610.6999999999999px;" width="10" height="10" viewBox="0 0 10 10"><circle cx="5" cy="5" r="3.7" stroke="#7a9df0" stroke-width="2" fill="none"/></svg>
<div class="t" style="left:247.5px;top:624.57px;font-size:10.2px;color:#2b3a48;font-weight:400;">S</div>
<div class="t" style="left:192.5px;top:624.57px;font-size:10.2px;color:#2b3a48;font-weight:400;">Dec 18</div>
<svg style="position:absolute;left:234.6px;top:624.1999999999999px;" width="10" height="10" viewBox="0 0 10 10"><circle cx="5" cy="5" r="3.7" stroke="#7a9df0" stroke-width="2" fill="none"/></svg>
<div class="t" style="left:247.5px;top:639.27px;font-size:10.2px;color:#2b3a48;font-weight:400;">S</div>
<div class="t" style="left:192.5px;top:639.27px;font-size:10.2px;color:#2b3a48;font-weight:400;">Dec 18</div>
<div style="position:absolute;left:234.6px;top:638.7px;width:9.6px;height:9.6px;background:#f2a30f"></div>
<div style="position:absolute;left:189.2px;top:439.4px;width:62px;height:1px;background:#c9ccd6"></div>
<div style="position:absolute;left:189.2px;top:523.5px;width:62px;height:1px;background:#c9ccd6"></div>
<div style="position:absolute;left:189.2px;top:579.7px;width:62px;height:1px;background:#c9ccd6"></div>
<div style="position:absolute;left:189.2px;top:593.4px;width:62px;height:1px;background:#c9ccd6"></div>
<div style="position:absolute;left:189.2px;top:607.6px;width:62px;height:1px;background:#c9ccd6"></div>
<div style="position:absolute;left:189.2px;top:635.7px;width:62px;height:1px;background:#c9ccd6"></div>
<div style="position:absolute;left:189.2px;top:649.4px;width:62px;height:13.7px;background:#dfe7f2;border-top:1px solid #9fb6d8;box-sizing:border-box"></div>
<div class="t" style="left:192.5px;top:651.80px;font-size:10.4px;color:#1f2e3d;font-weight:400;-webkit-text-stroke:0.45px #1f2e3d;">Dec 18</div>
<div style="position:absolute;left:189.2px;top:663.1px;width:62px;height:12.6px;background:#dfe3ea;border-top:1px solid #a9bcd9;box-sizing:border-box;border-radius:0 0 0 3px"></div>
<div class="t" style="left:192.5px;top:665.60px;font-size:10.4px;color:#1f2e3d;font-weight:400;-webkit-text-stroke:0.45px #1f2e3d;">Total</div>
<div style="position:absolute;left:229.2px;top:649.4px;width:1px;height:26.3px;background:#b9c2d0"></div>
<div style="position:absolute;left:251px;top:82px;width:600px;height:696.5px;background:#fff;border:1px solid #d4d4dc;border-radius:5px;box-sizing:border-box;box-shadow:0 6px 30px rgba(0,0,0,0.30)"></div>
<div style="position:absolute;left:252px;top:83px;width:560px;height:23.5px;background:#f1f1f9;border-radius:5px 0 0 0"></div>
<svg style="position:absolute;left:259px;top:88px;" width="12" height="10.5" viewBox="0 0 12 11"><path d="M0 0h3.3v7.8h3.8v3.1H2a2 2 0 0 1-2-2z" fill="#02233f"/><path d="M4.9 0h5.1a2 2 0 0 1 2 2v8.9H8.8V3H4.9z" fill="#8b1cf5"/></svg>
<div class="t" style="left:276.0px;top:88.75px;font-size:10.1px;color:#2b2b33;font-weight:400;">Drill down to posting level</div>
<div class="t" style="left:263.0px;top:115.91px;font-size:10.5px;color:#8e52d6;font-weight:400;-webkit-text-stroke:0.3px #8e52d6;">General</div>
<div style="position:absolute;left:259.5px;top:134.8px;width:600px;height:1.2px;background:#e2e2ea"></div>
<div style="position:absolute;left:259.5px;top:134.3px;width:50.5px;height:2.2px;background:#8a4fd6"></div>
<div style="position:absolute;left:259.8px;top:142px;width:600px;height:52.4px;border:1px solid #dfdfe6;border-radius:4px;box-sizing:border-box"></div>
<div class="t" style="left:269.0px;top:151.61px;font-size:10.5px;color:#1f2e3d;font-weight:400;-webkit-text-stroke:0.25px #1f2e3d;">Account:</div>
<div class="t" style="left:319.0px;top:151.61px;font-size:10.5px;color:#1f2e3d;font-weight:400;-webkit-text-stroke:0.25px #1f2e3d;">3000 Revenue (third)</div>
<div class="t" style="left:425.5px;top:151.61px;font-size:10.5px;color:#1f2e3d;font-weight:400;-webkit-text-stroke:0.25px #1f2e3d;">Data level:</div>
<div class="t" style="left:514.0px;top:151.61px;font-size:10.5px;color:#1f2e3d;font-weight:400;-webkit-text-stroke:0.25px #1f2e3d;">Actual</div>
<div class="t" style="left:576.7px;top:151.61px;font-size:10.5px;color:#1f2e3d;font-weight:400;-webkit-text-stroke:0.25px #1f2e3d;">Organization element:</div>
<div class="t" style="left:688.0px;top:151.61px;font-size:10.5px;color:#1f2e3d;font-weight:400;-webkit-text-stroke:0.25px #1f2e3d;">Associated Company</div>
<div class="t" style="left:269.0px;top:173.91px;font-size:10.5px;color:#1f2e3d;font-weight:400;-webkit-text-stroke:0.25px #1f2e3d;">Month:</div>
<div class="t" style="left:319.0px;top:173.91px;font-size:10.5px;color:#1f2e3d;font-weight:400;-webkit-text-stroke:0.25px #1f2e3d;">December 2018</div>
<div class="t" style="left:425.5px;top:173.91px;font-size:10.5px;color:#1f2e3d;font-weight:400;-webkit-text-stroke:0.25px #1f2e3d;">Adjustment level:</div>
<div class="t" style="left:514.0px;top:173.91px;font-size:10.5px;color:#1f2e3d;font-weight:400;-webkit-text-stroke:0.25px #1f2e3d;">Import data</div>
<div class="t" style="left:576.7px;top:173.91px;font-size:10.5px;color:#1f2e3d;font-weight:400;-webkit-text-stroke:0.25px #1f2e3d;">Transaction type:</div>
<div class="t" style="left:688.0px;top:173.91px;font-size:10.5px;color:#1f2e3d;font-weight:400;-webkit-text-stroke:0.25px #1f2e3d;">000 Default</div>
<div class="t" style="left:262.8px;top:204.91px;font-size:10.5px;color:#8e52d6;font-weight:400;-webkit-text-stroke:0.3px #8e52d6;">Postings</div>
<div style="position:absolute;left:259.5px;top:223.3px;width:600px;height:1.2px;background:#e2e2ea"></div>
<div style="position:absolute;left:259.5px;top:222.8px;width:54.19999999999999px;height:2.2px;background:#8a4fd6"></div>
<div style="position:absolute;left:259.5px;top:231px;width:600px;height:249.5px;border:1px solid #dfdfe6;border-radius:4px;box-sizing:border-box"></div>
<div style="position:absolute;left:270px;top:240.3px;width:10px;height:10px;border:1px solid #c6c6cf;border-radius:2px;box-sizing:border-box;background:#fff"></div>
<div class="t" style="left:285.5px;top:241.00px;font-size:10.4px;color:#1f2e3d;font-weight:400;">Group account lines by account</div>
<div style="position:absolute;left:268.8px;top:263.3px;width:599.2px;height:12px;background:#2f5467;border-radius:3px 3px 0 0"></div>
<div style="position:absolute;left:282.29999999999995px;top:263.3px;width:1.4px;height:12px;background:#8ea0ae"></div>
<div style="position:absolute;left:325.59999999999997px;top:263.3px;width:1.4px;height:12px;background:#8ea0ae"></div>
<div style="position:absolute;left:392.4px;top:263.3px;width:1.4px;height:12px;background:#8ea0ae"></div>
<div style="position:absolute;left:440.29999999999995px;top:263.3px;width:1.4px;height:12px;background:#8ea0ae"></div>
<div style="position:absolute;left:519.6px;top:263.3px;width:1.4px;height:12px;background:#8ea0ae"></div>
<div style="position:absolute;left:578.6999999999999px;top:263.3px;width:1.4px;height:12px;background:#8ea0ae"></div>
<div style="position:absolute;left:657.6999999999999px;top:263.3px;width:1.4px;height:12px;background:#8ea0ae"></div>
<div style="position:absolute;left:748.5px;top:263.3px;width:1.4px;height:12px;background:#8ea0ae"></div>
<div class="t" style="left:268.8px;width:14.099999999999966px;text-align:center;top:263.70px;height:12px;line-height:12px;font-size:10.4px;color:#e9eff3;-webkit-text-stroke:0.35px #e9eff3;overflow:hidden">#</div>
<div class="t" style="left:282.9px;width:43.30000000000001px;text-align:center;top:263.70px;height:12px;line-height:12px;font-size:10.4px;color:#e9eff3;-webkit-text-stroke:0.35px #e9eff3;overflow:hidden">Posting</div>
<div class="t" style="left:326.2px;width:66.80000000000001px;text-align:center;top:263.70px;height:12px;line-height:12px;font-size:10.4px;color:#e9eff3;-webkit-text-stroke:0.35px #e9eff3;overflow:hidden">Posting date</div>
<div class="t" style="left:393px;width:47.89999999999998px;text-align:center;top:263.70px;height:12px;line-height:12px;font-size:10.4px;color:#e9eff3;-webkit-text-stroke:0.35px #e9eff3;overflow:hidden">Account</div>
<div class="t" style="left:440.9px;width:79.30000000000007px;text-align:center;top:263.70px;height:12px;line-height:12px;font-size:10.4px;color:#e9eff3;-webkit-text-stroke:0.35px #e9eff3;overflow:hidden">Description</div>
<div class="t" style="left:520.2px;width:59.09999999999991px;text-align:center;top:263.70px;height:12px;line-height:12px;font-size:10.4px;color:#e9eff3;-webkit-text-stroke:0.35px #e9eff3;overflow:hidden">Amount</div>
<div class="t" style="left:579.3px;width:79.0px;text-align:center;top:263.70px;height:12px;line-height:12px;font-size:10.4px;color:#e9eff3;-webkit-text-stroke:0.35px #e9eff3;overflow:hidden">Posting header</div>
<div class="t" style="left:658.3px;width:90.80000000000007px;text-align:center;top:263.70px;height:12px;line-height:12px;font-size:10.4px;color:#e9eff3;-webkit-text-stroke:0.35px #e9eff3;overflow:hidden">Posting entry text</div>
<div class="t" style="left:749.1px;width:118.89999999999998px;text-align:center;top:263.70px;height:12px;line-height:12px;font-size:10.4px;color:#e9eff3;-webkit-text-stroke:0.35px #e9eff3;overflow:hidden">Original posting</div>
<div style="position:absolute;left:268.8px;top:275.3px;width:599.2px;height:84.65px;border-left:1px solid #c9ccd6;border-right:1px solid #c9ccd6;box-sizing:border-box"></div>
<div style="position:absolute;left:282.4px;top:275.3px;width:1px;height:84.65px;background:#d3d6de"></div>
<div style="position:absolute;left:325.7px;top:275.3px;width:1px;height:84.65px;background:#d3d6de"></div>
<div style="position:absolute;left:392.5px;top:275.3px;width:1px;height:84.65px;background:#d3d6de"></div>
<div style="position:absolute;left:440.4px;top:275.3px;width:1px;height:84.65px;background:#d3d6de"></div>
<div style="position:absolute;left:519.7px;top:275.3px;width:1px;height:84.65px;background:#d3d6de"></div>
<div style="position:absolute;left:578.8px;top:275.3px;width:1px;height:84.65px;background:#d3d6de"></div>
<div style="position:absolute;left:657.8px;top:275.3px;width:1px;height:84.65px;background:#d3d6de"></div>
<div style="position:absolute;left:748.6px;top:275.3px;width:1px;height:84.65px;background:#d3d6de"></div>
<div style="position:absolute;left:268.8px;top:346.55px;width:599.2px;height:13.4px;border:1.2px solid #9ea5b1;border-top:1.5px solid #aab0bb;box-sizing:border-box;border-radius:0 0 3px 3px"></div>
<div style="position:absolute;left:749.6px;top:276.3px;width:118.39999999999998px;height:13.05px;background:#dbe7f7"></div>
<div class="t" style="left:268.8px;width:14.099999999999966px;text-align:center;top:278.90px;font-size:10.4px;color:#1f2e3d">1</div>
<div class="t" style="left:286.9px;top:278.90px;font-size:10.4px;color:#6b5fd8;">571340</div>
<div class="t" style="left:326.2px;width:66.80000000000001px;text-align:center;top:278.90px;font-size:10.4px;color:#6b5fd8">25.11.2018</div>
<div class="t" style="left:393px;width:47.89999999999998px;text-align:center;top:278.90px;font-size:10.4px;color:#6b5fd8">3000</div>
<div class="t" style="left:440.9px;width:79.30000000000007px;text-align:center;top:278.90px;font-size:10.4px;color:#6b5fd8">Revenue (third)</div>
<div class="t" style="left:520.2px;width:55.09999999999991px;text-align:right;top:278.90px;font-size:10.4px;color:#6b5fd8">107,797.91</div>
<div class="t" style="left:662.3px;top:278.90px;font-size:10.4px;color:#6b5fd8;letter-spacing:-0.3px;">RG-NR 32841</div>
<div class="t" style="left:753.1px;top:278.90px;font-size:10.4px;color:#6b5fd8;">Display original posting</div>
<div class="t" style="left:268.8px;width:14.099999999999966px;text-align:center;top:292.95px;font-size:10.4px;color:#1f2e3d">2</div>
<div class="t" style="left:286.9px;top:292.95px;font-size:10.4px;color:#6b5fd8;">736149</div>
<div class="t" style="left:326.2px;width:66.80000000000001px;text-align:center;top:292.95px;font-size:10.4px;color:#6b5fd8">07.12.2018</div>
<div class="t" style="left:393px;width:47.89999999999998px;text-align:center;top:292.95px;font-size:10.4px;color:#6b5fd8">3000</div>
<div class="t" style="left:440.9px;width:79.30000000000007px;text-align:center;top:292.95px;font-size:10.4px;color:#6b5fd8">Revenue (third)</div>
<div class="t" style="left:520.2px;width:55.09999999999991px;text-align:right;top:292.95px;font-size:10.4px;color:#6b5fd8">165,842.93</div>
<div class="t" style="left:662.3px;top:292.95px;font-size:10.4px;color:#6b5fd8;letter-spacing:-0.3px;">RG-NR 42393</div>
<div class="t" style="left:753.1px;top:292.95px;font-size:10.4px;color:#6b5fd8;">Display original posting</div>
<div class="t" style="left:268.8px;width:14.099999999999966px;text-align:center;top:307.00px;font-size:10.4px;color:#1f2e3d">3</div>
<div class="t" style="left:286.9px;top:307.00px;font-size:10.4px;color:#6b5fd8;">782154</div>
<div class="t" style="left:326.2px;width:66.80000000000001px;text-align:center;top:307.00px;font-size:10.4px;color:#6b5fd8">08.12.2018</div>
<div class="t" style="left:393px;width:47.89999999999998px;text-align:center;top:307.00px;font-size:10.4px;color:#6b5fd8">3000</div>
<div class="t" style="left:440.9px;width:79.30000000000007px;text-align:center;top:307.00px;font-size:10.4px;color:#6b5fd8">Revenue (third)</div>
<div class="t" style="left:520.2px;width:55.09999999999991px;text-align:right;top:307.00px;font-size:10.4px;color:#6b5fd8">248,764.40</div>
<div class="t" style="left:662.3px;top:307.00px;font-size:10.4px;color:#6b5fd8;letter-spacing:-0.3px;">RG-NR 49096</div>
<div class="t" style="left:753.1px;top:307.00px;font-size:10.4px;color:#6b5fd8;">Display original posting</div>
<div class="t" style="left:268.8px;width:14.099999999999966px;text-align:center;top:321.05px;font-size:10.4px;color:#1f2e3d">4</div>
<div class="t" style="left:286.9px;top:321.05px;font-size:10.4px;color:#6b5fd8;">480184</div>
<div class="t" style="left:326.2px;width:66.80000000000001px;text-align:center;top:321.05px;font-size:10.4px;color:#6b5fd8">10.12.2018</div>
<div class="t" style="left:393px;width:47.89999999999998px;text-align:center;top:321.05px;font-size:10.4px;color:#6b5fd8">3000</div>
<div class="t" style="left:440.9px;width:79.30000000000007px;text-align:center;top:321.05px;font-size:10.4px;color:#6b5fd8">Revenue (third)</div>
<div class="t" style="left:520.2px;width:55.09999999999991px;text-align:right;top:321.05px;font-size:10.4px;color:#6b5fd8">82,921.47</div>
<div class="t" style="left:662.3px;top:321.05px;font-size:10.4px;color:#6b5fd8;letter-spacing:-0.3px;">RG-NR 18431</div>
<div class="t" style="left:753.1px;top:321.05px;font-size:10.4px;color:#6b5fd8;">Display original posting</div>
<div class="t" style="left:268.8px;width:14.099999999999966px;text-align:center;top:335.10px;font-size:10.4px;color:#1f2e3d">5</div>
<div class="t" style="left:286.9px;top:335.10px;font-size:10.4px;color:#6b5fd8;">832711</div>
<div class="t" style="left:326.2px;width:66.80000000000001px;text-align:center;top:335.10px;font-size:10.4px;color:#6b5fd8">12.12.2018</div>
<div class="t" style="left:393px;width:47.89999999999998px;text-align:center;top:335.10px;font-size:10.4px;color:#6b5fd8">3000</div>
<div class="t" style="left:440.9px;width:79.30000000000007px;text-align:center;top:335.10px;font-size:10.4px;color:#6b5fd8">Revenue (third)</div>
<div class="t" style="left:520.2px;width:55.09999999999991px;text-align:right;top:335.10px;font-size:10.4px;color:#6b5fd8">223,887.96</div>
<div class="t" style="left:662.3px;top:335.10px;font-size:10.4px;color:#6b5fd8;letter-spacing:-0.3px;">RG-NR 13602</div>
<div class="t" style="left:753.1px;top:335.10px;font-size:10.4px;color:#6b5fd8;">Display original posting</div>
<div class="t" style="left:520.2px;width:55.09999999999991px;text-align:right;top:349.35px;font-size:10.4px;color:#1f2e3d">829,214.67</div>
<div class="t" style="left:263.3px;top:496.41px;font-size:10.5px;color:#8e52d6;font-weight:400;-webkit-text-stroke:0.3px #8e52d6;">Details on selected posting</div>
<div style="position:absolute;left:259.5px;top:513.8px;width:600px;height:1.2px;background:#e2e2ea"></div>
<div style="position:absolute;left:259.5px;top:513.3px;width:139.89999999999998px;height:2.2px;background:#8a4fd6"></div>
<div style="position:absolute;left:259.6px;top:521.6px;width:600px;height:212px;border:1px solid #dfdfe6;border-radius:4px;box-sizing:border-box"></div>
<div class="t" style="left:268.9px;top:537.91px;font-size:10.5px;color:#1f2e3d;font-weight:400;-webkit-text-stroke:0.25px #1f2e3d;">Posting:</div>
<div class="t" style="left:315.0px;top:537.91px;font-size:10.5px;color:#1f2e3d;font-weight:400;-webkit-text-stroke:0.25px #1f2e3d;">571340</div>
<div class="t" style="left:357.8px;top:537.91px;font-size:10.5px;color:#1f2e3d;font-weight:400;-webkit-text-stroke:0.25px #1f2e3d;">Posting date:</div>
<div class="t" style="left:426.6px;top:537.91px;font-size:10.5px;color:#1f2e3d;font-weight:400;-webkit-text-stroke:0.25px #1f2e3d;">25.11.2018</div>
<div class="t" style="left:487.4px;top:537.91px;font-size:10.5px;color:#1f2e3d;font-weight:400;-webkit-text-stroke:0.25px #1f2e3d;">Collector:</div>
<div class="t" style="left:540.0px;top:537.91px;font-size:10.5px;color:#1f2e3d;font-weight:400;-webkit-text-stroke:0.25px #1f2e3d;">CRF</div>
<div class="t" style="left:567.4px;top:537.91px;font-size:10.5px;color:#1f2e3d;font-weight:400;-webkit-text-stroke:0.25px #1f2e3d;">Entry date:</div>
<div class="t" style="left:625.0px;top:537.91px;font-size:10.5px;color:#1f2e3d;font-weight:400;-webkit-text-stroke:0.25px #1f2e3d;">05.12.2018</div>
<div class="t" style="left:686.6px;top:537.91px;font-size:10.5px;color:#1f2e3d;font-weight:400;-webkit-text-stroke:0.25px #1f2e3d;">Original posting:</div>
<div class="t" style="left:779.0px;top:537.91px;font-size:10.5px;color:#b58ae8;font-weight:400;-webkit-text-stroke:0.25px #b58ae8;">Display original posting</div>
<div style="position:absolute;left:268.8px;top:565.5px;width:449.49999999999994px;height:12px;background:#2f5467;border-radius:3px 3px 0 0"></div>
<div style="position:absolute;left:282.29999999999995px;top:565.5px;width:1.4px;height:12px;background:#8ea0ae"></div>
<div style="position:absolute;left:329.4px;top:565.5px;width:1.4px;height:12px;background:#8ea0ae"></div>
<div style="position:absolute;left:528.8px;top:565.5px;width:1.4px;height:12px;background:#8ea0ae"></div>
<div style="position:absolute;left:588.1px;top:565.5px;width:1.4px;height:12px;background:#8ea0ae"></div>
<div style="position:absolute;left:647.0px;top:565.5px;width:1.4px;height:12px;background:#8ea0ae"></div>
<div class="t" style="left:268.8px;width:14.099999999999966px;text-align:center;top:565.90px;height:12px;line-height:12px;font-size:10.4px;color:#e9eff3;-webkit-text-stroke:0.35px #e9eff3;overflow:hidden">#</div>
<div class="t" style="left:282.9px;width:47.10000000000002px;text-align:center;top:565.90px;height:12px;line-height:12px;font-size:10.4px;color:#e9eff3;-webkit-text-stroke:0.35px #e9eff3;overflow:hidden">Account</div>
<div class="t" style="left:330px;width:199.39999999999998px;text-align:center;top:565.90px;height:12px;line-height:12px;font-size:10.4px;color:#e9eff3;-webkit-text-stroke:0.35px #e9eff3;overflow:hidden">Description</div>
<div class="t" style="left:529.4px;width:59.30000000000007px;text-align:center;top:565.90px;height:12px;line-height:12px;font-size:10.4px;color:#e9eff3;-webkit-text-stroke:0.35px #e9eff3;overflow:hidden">Debit</div>
<div class="t" style="left:588.7px;width:58.89999999999998px;text-align:center;top:565.90px;height:12px;line-height:12px;font-size:10.4px;color:#e9eff3;-webkit-text-stroke:0.35px #e9eff3;overflow:hidden">Credit</div>
<div class="t" style="left:647.6px;width:70.69999999999993px;text-align:center;top:565.90px;height:12px;line-height:12px;font-size:10.4px;color:#e9eff3;-webkit-text-stroke:0.35px #e9eff3;overflow:hidden">Posting text</div>
<div style="position:absolute;left:268.8px;top:577.5px;width:449.49999999999994px;height:56.550000000000004px;border-left:1px solid #c9ccd6;border-right:1px solid #c9ccd6;box-sizing:border-box"></div>
<div style="position:absolute;left:282.4px;top:577.5px;width:1px;height:56.550000000000004px;background:#d3d6de"></div>
<div style="position:absolute;left:329.5px;top:577.5px;width:1px;height:56.550000000000004px;background:#d3d6de"></div>
<div style="position:absolute;left:528.9px;top:577.5px;width:1px;height:56.550000000000004px;background:#d3d6de"></div>
<div style="position:absolute;left:588.2px;top:577.5px;width:1px;height:56.550000000000004px;background:#d3d6de"></div>
<div style="position:absolute;left:647.1px;top:577.5px;width:1px;height:56.550000000000004px;background:#d3d6de"></div>
<div style="position:absolute;left:268.8px;top:620.65px;width:449.49999999999994px;height:13.4px;border:1.2px solid #9ea5b1;border-top:1.5px solid #aab0bb;box-sizing:border-box;border-radius:0 0 3px 3px"></div>
<div class="t" style="left:268.8px;width:14.099999999999966px;text-align:center;top:581.10px;font-size:10.4px;color:#1f2e3d">1</div>
<div class="t" style="left:282.9px;width:47.10000000000002px;text-align:center;top:581.10px;font-size:10.4px;color:#1f2e3d">1400</div>
<div class="t" style="left:334px;top:581.10px;font-size:10.4px;color:#1f2e3d;">Receivables from deliveries and services</div>
<div class="t" style="left:529.4px;width:55.30000000000007px;text-align:right;top:581.10px;font-size:10.4px;color:#1f2e3d">128,279.51</div>
<div class="t" style="left:268.8px;width:14.099999999999966px;text-align:center;top:595.15px;font-size:10.4px;color:#1f2e3d">2</div>
<div class="t" style="left:282.9px;width:47.10000000000002px;text-align:center;top:595.15px;font-size:10.4px;color:#1f2e3d">3000</div>
<div class="t" style="left:334px;top:595.15px;font-size:10.4px;color:#1f2e3d;">Revenue (third)</div>
<div class="t" style="left:588.7px;width:54.89999999999998px;text-align:right;top:595.15px;font-size:10.4px;color:#1f2e3d">107,797.91</div>
<div class="t" style="left:651.6px;top:595.15px;font-size:10.4px;color:#1f2e3d;letter-spacing:-0.3px;">RG-NR 32841</div>
<div class="t" style="left:268.8px;width:14.099999999999966px;text-align:center;top:609.20px;font-size:10.4px;color:#1f2e3d">3</div>
<div class="t" style="left:282.9px;width:47.10000000000002px;text-align:center;top:609.20px;font-size:10.4px;color:#1f2e3d">1610</div>
<div class="t" style="left:334px;top:609.20px;font-size:10.4px;color:#1f2e3d;">Liabilities VAT</div>
<div class="t" style="left:588.7px;width:54.89999999999998px;text-align:right;top:609.20px;font-size:10.4px;color:#1f2e3d">20,481.60</div>
<div class="t" style="left:529.4px;width:55.30000000000007px;text-align:right;top:623.45px;font-size:10.4px;color:#1f2e3d">128,279.51</div>
<div class="t" style="left:588.7px;width:54.89999999999998px;text-align:right;top:623.45px;font-size:10.4px;color:#1f2e3d">128,279.51</div>
<div class="t" style="left:267.7px;top:751.70px;font-size:10.4px;color:#8e52d6;font-weight:400;-webkit-text-stroke:0.5px #8e52d6;">Execution details</div>
<div style="position:absolute;left:0px;top:786px;width:794px;height:46px;background:#fbfbfd"></div>
<div style="position:absolute;left:0px;top:786px;width:794px;height:1px;background:#e2e2e7"></div>
<div style="position:absolute;left:251px;top:786px;width:560px;height:16px;background:linear-gradient(rgba(0,0,0,0.10),rgba(0,0,0,0))"></div>
<div style="position:absolute;left:6.3px;top:804.4px;width:180.7px;height:15.6px;border:1.3px solid #7f5fc0;border-radius:2.5px;box-sizing:border-box;background:#fcf1fd"></div>
<svg style="position:absolute;left:15px;top:807px;" width="8" height="10" viewBox="0 0 8 10"><circle cx="3.9" cy="2.6" r="2.4" fill="#f0ac12"/><path d="M2.7 4.2h2.4l2.3 5.6H.4z" fill="#f0ac12"/></svg>
<div class="t" style="left:30.2px;top:807.24px;font-size:10.7px;color:#7649c4;font-weight:400;-webkit-text-stroke:0.45px #7649c4;">1: P &amp; L (Total Cost Accounting)</div>
<svg style="position:absolute;left:201.5px;top:807px;" width="8" height="10" viewBox="0 0 8 10"><circle cx="3.9" cy="2.6" r="2.4" fill="#c9402a"/><path d="M2.7 4.2h2.4l2.3 5.6H.4z" fill="#c9402a"/></svg>
<div class="t" style="left:216.4px;top:807.24px;font-size:10.7px;color:#7649c4;font-weight:400;-webkit-text-stroke:0.45px #7649c4;">2: Balance Sheet (Local GAAP)</div>
<svg style="position:absolute;left:383.5px;top:807px;" width="8" height="10" viewBox="0 0 8 10"><circle cx="3.9" cy="2.6" r="2.4" fill="#2e8a3a"/><path d="M2.7 4.2h2.4l2.3 5.6H.4z" fill="#2e8a3a"/></svg>
<div class="t" style="left:398.5px;top:807.24px;font-size:10.7px;color:#7649c4;font-weight:400;-webkit-text-stroke:0.45px #7649c4;">3: Cash Flow</div>
<svg style="position:absolute;left:479px;top:806px;" width="9" height="11" viewBox="0 0 9 11"><rect x="0" y="0" width="9" height="11" rx="1.5" fill="#7ea2f3"/><path d="M2 3h5M2 5.5h5M2 8h5" stroke="#fff" stroke-width="1"/></svg>
<div class="t" style="left:495.3px;top:807.24px;font-size:10.7px;color:#7649c4;font-weight:400;-webkit-text-stroke:0.45px #7649c4;">4: KPI report</div>
<svg style="position:absolute;left:574px;top:806px;" width="12" height="11" viewBox="0 0 12 11"><path d="M1 2.5A1.2 1.2 0 0 1 2.2 1.3h2.6l1.2 1.4h4.3A1 1 0 0 1 11 3.7V10H2.2A1.2 1.2 0 0 1 1 8.8z" stroke="#6e7080" stroke-width="1.1" fill="none"/><rect x="5.5" y="5.5" width="4.5" height="5" fill="#fff" stroke="#333" stroke-width="1"/></svg>
<div class="t" style="left:589.6px;top:807.24px;font-size:10.7px;color:#7649c4;font-weight:400;-webkit-text-stroke:0.45px #7649c4;">5: Data files</div>
<div style="position:absolute;left:666px;top:806.75px;width:9.5px;height:9.5px;background:#7ea2f3;border-radius:50%"></div>
<div class="t" style="left:681.0px;top:807.24px;font-size:10.7px;color:#7649c4;font-weight:400;-webkit-text-stroke:0.45px #7649c4;">6: Other own work capitalised</div>
</body></html>
